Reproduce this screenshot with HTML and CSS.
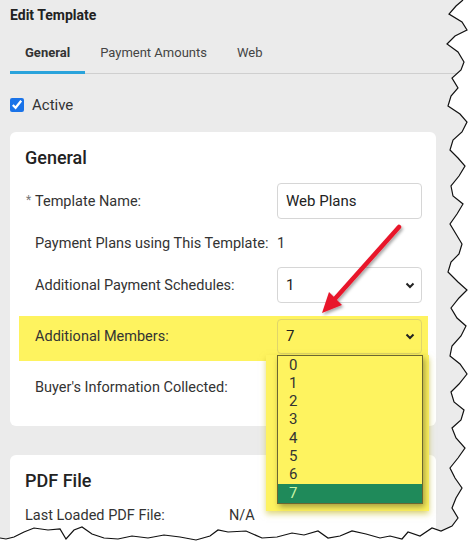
FILE: index.html
```html
<!DOCTYPE html>
<html lang="en">
<head>
    <meta charset="UTF-8">
    <title>Edit Template</title>
    <link rel="stylesheet" href="styles.css">
</head>
<body>
    <div class="screen">
        <div class="page-title">Edit Template</div>

        <div class="tabs">
            <div class="tab active">General</div>
            <div class="tab">Payment Amounts</div>
            <div class="tab">Web</div>
        </div>

        <label class="active-row">
            <input type="checkbox" checked>
            <span>Active</span>
        </label>

        <div class="cards">
            <div class="card">
                <h3>General</h3>
                <div class="form">
                    <div class="row">
                        <div class="label"><span class="req">*</span>Template Name:</div>
                        <div class="input">Web Plans</div>
                    </div>
                    <div class="row">
                        <div class="label">Payment Plans using This Template:</div>
                        <div class="value">1</div>
                    </div>
                    <div class="row">
                        <div class="label">Additional Payment Schedules:</div>
                        <div class="select">
                            <span>1</span>
                            <svg width="10" height="7" viewBox="0 0 10 7"><polyline points="1.5,1.5 5,5 8.5,1.5" fill="none" stroke="#222" stroke-width="2"/></svg>
                        </div>
                    </div>
                    <div class="row highlight">
                        <div class="label">Additional Members:</div>
                        <div class="select open">
                            <span>7</span>
                            <svg width="10" height="7" viewBox="0 0 10 7"><polyline points="1.5,1.5 5,5 8.5,1.5" fill="none" stroke="#222" stroke-width="2"/></svg>
                            <div class="dropdown">
                                <ul>
                                    <li>0</li>
                                    <li>1</li>
                                    <li>2</li>
                                    <li>3</li>
                                    <li>4</li>
                                    <li>5</li>
                                    <li>6</li>
                                    <li class="selected">7</li>
                                </ul>
                            </div>
                        </div>
                    </div>
                    <div class="row">
                        <div class="label">Buyer's Information Collected:</div>
                    </div>
                </div>
            </div>

            <div class="card">
                <h3>PDF File</h3>
                <div class="pdf-row">
                    <span class="pdf-label">Last Loaded PDF File:</span>
                    <span>N/A</span>
                </div>
            </div>
        </div>

        <!-- callout arrow -->
        <svg class="arrow" width="474" height="546" viewBox="0 0 474 546">
            <defs>
                <filter id="shadow" x="-20%" y="-20%" width="140%" height="140%">
                    <feDropShadow dx="1.5" dy="2" stdDeviation="1.5" flood-color="#000" flood-opacity="0.35"/>
                </filter>
            </defs>
            <g filter="url(#shadow)">
                <line x1="399" y1="227" x2="333" y2="301" stroke="#e8192c" stroke-width="4.5" stroke-linecap="round"/>
                <polygon points="322,313 342,305 329,292" fill="#e8192c"/>
            </g>
        </svg>

        <!-- torn edge -->
        <svg class="tear" width="474" height="546" viewBox="0 0 474 546">
            <path fill="#fff" d="M474 0 L463 0 L456 6 L449 14 L462 22 L467 30 L455 36 L447 44 L458 52 L464 62 L461 70 L452 78 L458 88 L451 96 L448 106 L460 114 L467 122 L462 132 L453 140 L450 150 L458 158 L465 166 L459 176 L451 186 L453 196 L463 204 L457 214 L450 224 L456 234 L462 244 L459 254 L451 262 L448 272 L458 282 L467 290 L459 298 L451 308 L457 318 L466 326 L461 336 L452 346 L450 356 L460 364 L467 374 L459 384 L451 392 L454 402 L464 410 L461 420 L452 428 L456 438 L465 448 L458 458 L450 468 L455 478 L462 488 L456 498 L452 508 L458 518 L452 526 L441 531 L432 528 L420 536 L408 532 L402 539 L390 536 L380 538 L366 534 L352 531 L340 536 L328 538 L318 531 L304 535 L292 533 L277 537 L262 538 L246 531 L228 532 L218 530 L210 536 L196 540 L180 537 L164 535 L148 538 L132 536 L118 539 L104 538 L92 534 L82 527 L74 530 L66 539 L60 529 L48 530 L34 528 L24 532 L14 537 L6 539 L0 538 L0 546 L474 546 Z"/>
            <path fill="none" stroke="#111" stroke-width="1.2" d="M463 0 L456 6 L449 14 L462 22 L467 30 L455 36 L447 44 L458 52 L464 62 L461 70 L452 78 L458 88 L451 96 L448 106 L460 114 L467 122 L462 132 L453 140 L450 150 L458 158 L465 166 L459 176 L451 186 L453 196 L463 204 L457 214 L450 224 L456 234 L462 244 L459 254 L451 262 L448 272 L458 282 L467 290 L459 298 L451 308 L457 318 L466 326 L461 336 L452 346 L450 356 L460 364 L467 374 L459 384 L451 392 L454 402 L464 410 L461 420 L452 428 L456 438 L465 448 L458 458 L450 468 L455 478 L462 488 L456 498 L452 508 L458 518 L452 526 L441 531 L432 528 L420 536 L408 532 L402 539 L390 536 L380 538 L366 534 L352 531 L340 536 L328 538 L318 531 L304 535 L292 533 L277 537 L262 538 L246 531 L228 532 L218 530 L210 536 L196 540 L180 537 L164 535 L148 538 L132 536 L118 539 L104 538 L92 534 L82 527 L74 530 L66 539 L60 529 L48 530 L34 528 L24 532 L14 537 L6 539 L0 538"/>
        </svg>
    </div>
</body>
</html>
```

FILE: styles.css
```css
body {
    margin: 0;
    padding: 0;
    background: #fff;
    font-family: Roboto, 'Liberation Sans', sans-serif;
    color: #333;
}

.screen {
    position: relative;
    width: 474px;
    height: 546px;
    overflow: hidden;
    background: #ebebeb;
}

.page-title {
    padding: 6px 10px 0;
    font-size: 14px;
    font-weight: 700;
    line-height: 18px;
    color: #222;
}

.tabs {
    display: flex;
    margin: 10px 0 0 10px;
    border-bottom: 1px solid #cfcfcf;
}

.tab {
    padding: 10px 15px 9px;
    font-size: 13px;
    line-height: 18px;
    color: #444;
    border-bottom: 3px solid transparent;
    margin-bottom: -1px;
}

.tab.active {
    font-weight: 700;
    color: #333;
    border-bottom-color: #2aa3db;
}

.active-row {
    display: flex;
    align-items: center;
    gap: 8px;
    padding: 22px 10px 0;
    font-size: 15px;
    color: #333;
}

.active-row input {
    margin: 0;
    width: 14px;
    height: 14px;
    accent-color: #1a73e8;
}

.cards {
    display: flex;
    flex-direction: column;
    gap: 29px;
    margin: 18px 0 0 10px;
    width: 426px;
}

.card {
    background: #fff;
    border-radius: 6px;
    padding: 14px 15px 21px;
}

.card h3 {
    margin: 0 0 13px;
    font-size: 18px;
    line-height: 24px;
    font-weight: 500;
    color: #222;
}

.form {
    display: flex;
    flex-direction: column;
    gap: 6px;
    padding-left: 10px;
}

.row {
    display: grid;
    grid-template-columns: 242px 145px;
    align-items: center;
    min-height: 36px;
    font-size: 14.5px;
}

.label {
    position: relative;
}

.req {
    position: absolute;
    left: -9px;
    top: 0;
    color: #777;
    font-size: 12px;
}

.input,
.select {
    box-sizing: border-box;
    height: 36px;
    border: 1px solid #d6d6d6;
    border-radius: 4px;
    background: #fff;
    padding: 0 8px;
    display: flex;
    align-items: center;
    font-size: 15px;
    color: #222;
}

.select {
    position: relative;
    justify-content: space-between;
    padding-right: 6px;
}

.highlight {
    background: #fef35f;
    margin: 7px -7px 2px -16px;
    padding: 2px 7px 7px 16px;
}

.highlight .select {
    background: #fef35f;
    border-color: #e0d56a;
    height: 35px;
}

.dropdown {
    position: absolute;
    top: 35px;
    left: -12px;
    padding: 0 6px 7px 11px;
    background: #fef35f;
    box-shadow: 0 3px 6px rgba(200, 190, 40, 0.6);
}

.dropdown ul {
    list-style: none;
    margin: 0;
    padding: 0;
    width: 144px;
    border: 1px solid #6b6630;
    box-shadow: 2px 3px 6px rgba(0, 0, 0, 0.35);
    background: #fef35f;
}

.dropdown li {
    height: 18.3px;
    line-height: 18px;
    padding-left: 11px;
    font-size: 15px;
    color: #333;
}

.dropdown li.selected {
    background: #1f8a5a;
    color: #c9f5a6;
    height: 19px;
}

.pdf-row {
    display: flex;
    font-size: 14.5px;
    line-height: 20px;
}

.pdf-label {
    width: 204px;
}

.arrow,
.tear {
    position: absolute;
    left: 0;
    top: 0;
    pointer-events: none;
}
```
